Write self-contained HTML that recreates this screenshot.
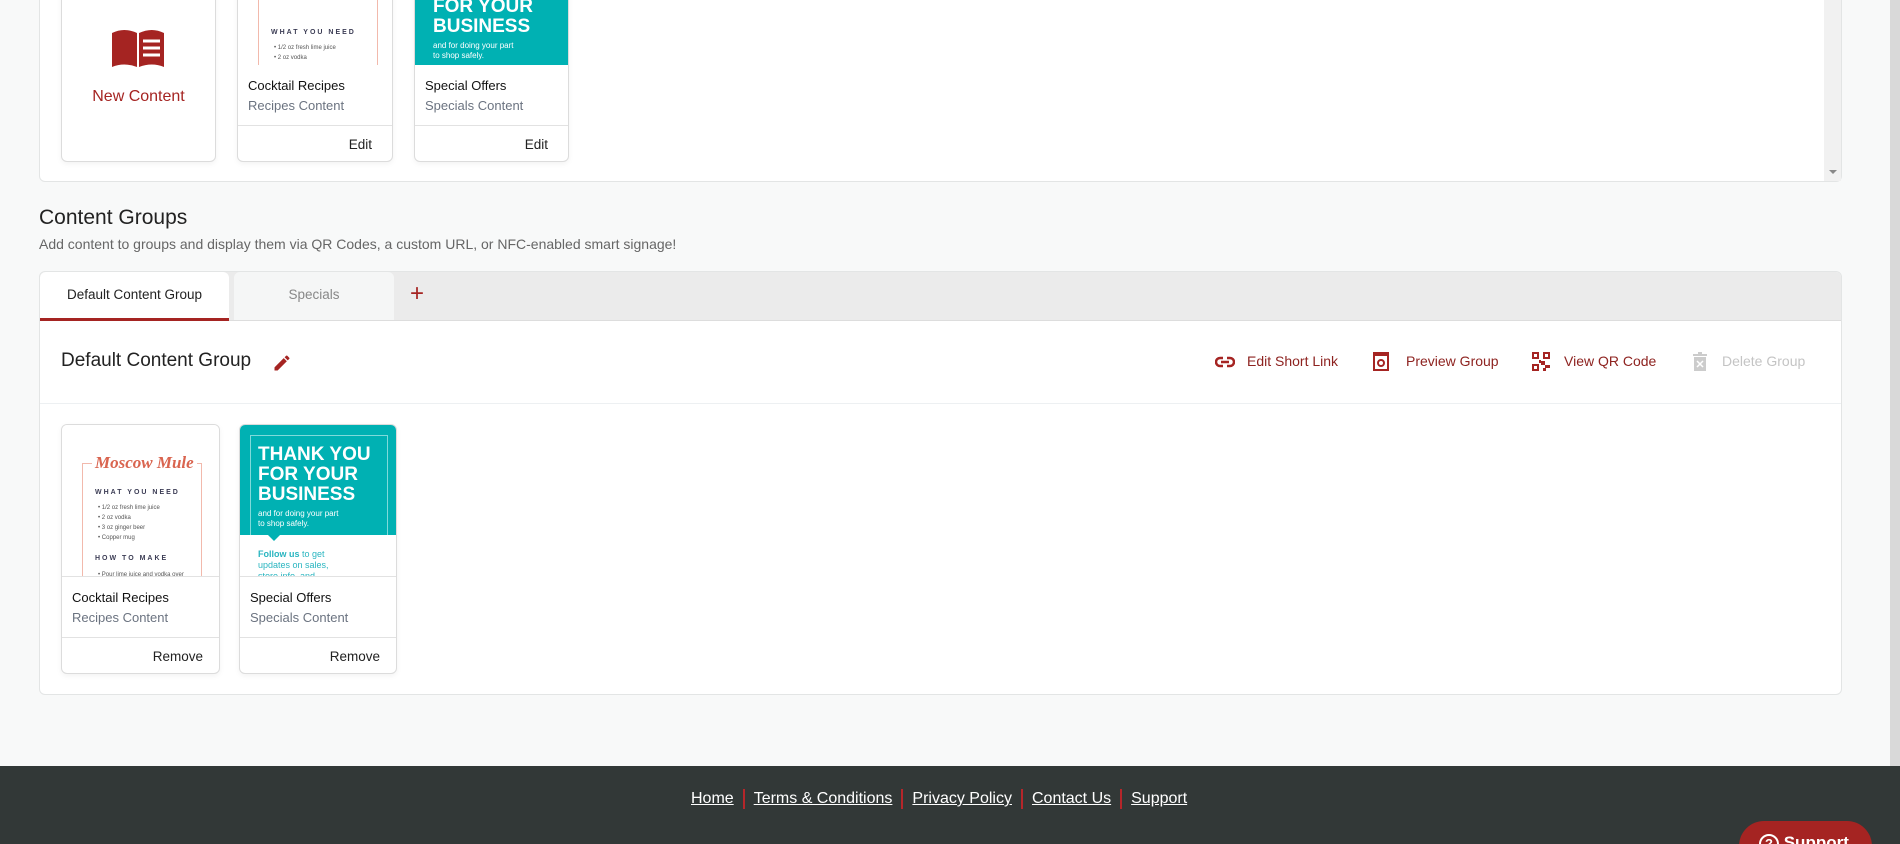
<!DOCTYPE html>
<html style="width:1900px;height:844px;overflow:hidden"><head><meta charset="utf-8"><style>
*{box-sizing:border-box;margin:0;padding:0}
body{width:1900px;height:844px;overflow:hidden;background:#f8f9f9;font-family:"Liberation Sans",sans-serif;position:relative;color:#222}
.abs{position:absolute}
.panel{position:absolute;background:#fff;border:1px solid #e3e5e5;border-radius:6px}
.card{position:absolute;background:#fff;border:1px solid #dcdcdc;border-radius:6px;overflow:hidden;box-shadow:0 2px 6px rgba(0,0,0,.05)}
.card .img{position:absolute;left:0;top:0;right:0;height:152px;overflow:hidden}
.card .t{position:absolute;left:10px;font-size:13px;color:#111}
.card .s{position:absolute;left:10px;font-size:13px;color:#6b7380}
.card .div{position:absolute;left:0;right:0;height:1px;background:#e2e2e2}
.card .b{position:absolute;right:16px;font-size:13.5px;color:#222}
.recipe{background:#fff}
.recipe .fr{position:absolute;left:20px;top:38px;width:120px;height:140px;border:1px solid #f2b9ac}
.recipe .mm{position:absolute;left:30px;top:28px;font:italic bold 17px "Liberation Serif",serif;color:#d9644f;background:#fff;padding:0 3px}
.recipe .h{position:absolute;left:33px;font:bold 7px "Liberation Sans",sans-serif;letter-spacing:2px;color:#3c3d55}
.recipe .l{position:absolute;left:36px;font-size:6px;color:#555;line-height:10px}
.teal{background:#00b1b3;color:#fff}
.teal .big{position:absolute;left:18px;font:bold 19px "Liberation Sans",sans-serif;line-height:20px}
.teal .sm{position:absolute;left:18px;font-size:8px;line-height:10px}
.act{position:absolute;top:353px;font-size:14px;color:#8e2320}
.foot a{color:#fff;text-decoration:underline;font-size:16px}
.sep{display:inline-block;width:2px;height:20px;background:#b5262a;vertical-align:middle;margin:0 9px}
</style></head><body>

<div class="panel" style="left:39px;top:-10px;width:1803px;height:192px"></div>
<div class="abs" style="left:1824px;top:0;width:17px;height:181px;background:#f1f1f1"></div>
<div class="abs" style="left:1829px;top:170px;width:0;height:0;border-left:4px solid transparent;border-right:4px solid transparent;border-top:4px solid #888"></div>

<div class="card" style="left:61px;top:-88px;width:155px;height:250px">
  <svg class="abs" style="left:48px;top:114px" width="56" height="44" viewBox="0 0 56 44"><path d="M2 6 Q14 0 27 6 V40 Q14 35 2 40Z" fill="#a52422"/><path d="M29 6 Q42 0 54 6 V40 Q42 35 29 40Z" fill="#a52422"/><path d="M33 14h17M33 21h17M33 28h17" stroke="#fff" stroke-width="3"/></svg>
  <div class="abs" style="left:0;right:0;top:175px;text-align:center;font-size:16px;color:#a52422">New Content</div>
</div>

<div class="card" style="left:237px;top:-88px;width:156px;height:250px">
  <div class="img recipe"><div class="fr"></div><div class="mm">Moscow Mule</div>
    <div class="h" style="top:116px">WHAT YOU NEED</div>
    <div class="l" style="top:130px">• 1/2 oz fresh lime juice<br>• 2 oz vodka<br>• 3 oz ginger beer</div></div>
  <div class="t" style="top:165px">Cocktail Recipes</div>
  <div class="s" style="top:185px">Recipes Content</div>
  <div class="div" style="top:212px"></div>
  <div class="b" style="top:224px;right:20px">Edit</div>
</div>

<div class="card" style="left:414px;top:-88px;width:155px;height:250px">
  <div class="img teal"><div class="big" style="top:84px">FOR YOUR<br>BUSINESS</div><div class="sm" style="top:128px">and for doing your part<br>to shop safely.</div></div>
  <div class="t" style="top:165px">Special Offers</div>
  <div class="s" style="top:185px">Specials Content</div>
  <div class="div" style="top:212px"></div>
  <div class="b" style="top:224px;right:20px">Edit</div>
</div>

<div class="abs" style="left:39px;top:206px;font-size:21px;color:#222">Content Groups</div>
<div class="abs" style="left:39px;top:236px;font-size:14px;color:#666">Add content to groups and display them via QR Codes, a custom URL, or NFC-enabled smart signage!</div>

<div class="panel" style="left:39px;top:271px;width:1803px;height:424px;overflow:hidden">
  <div class="abs" style="left:0;top:0;right:0;height:49px;background:#ebebeb;border-bottom:1px solid #ddd"></div>
  <div class="abs" style="left:0;top:0;width:189px;height:49px;background:#fff;border-bottom:3px solid #a52422;border-radius:6px 6px 0 0;text-align:center;line-height:46px;font-size:13.5px;color:#222">Default Content Group</div>
  <div class="abs" style="left:194px;top:0;width:160px;height:48px;background:#f5f6f6;border-radius:6px 6px 0 0;text-align:center;line-height:46px;font-size:13.5px;color:#888">Specials</div>
  <div class="abs" style="left:370px;top:8px;font-size:24px;color:#a52422">+</div>
  <div class="abs" style="left:0;right:0;top:131px;height:1px;background:#edf0f2"></div>
</div>
<div class="abs" style="left:61px;top:350px;font-size:19px;color:#222">Default Content Group</div>
<svg class="abs" style="left:272px;top:353px" width="20" height="20" viewBox="0 0 24 24"><path d="M3 17.25V21h3.75L17.8 9.94l-3.75-3.75L3 17.25zM20.7 7.04a1 1 0 000-1.41l-2.34-2.34a1 1 0 00-1.41 0l-1.83 1.83 3.75 3.75 1.83-1.83z" fill="#a52422"/></svg>

<svg class="abs" style="left:1215px;top:355px" width="20" height="14" viewBox="0 0 20 14"><path d="M8 3H5a4 4 0 000 8h3M12 3h3a4 4 0 010 8h-3M6 7h8" stroke="#a52422" stroke-width="2.5" fill="none"/></svg>
<div class="act" style="left:1247px">Edit Short Link</div>
<svg class="abs" style="left:1373px;top:352px" width="16" height="19" viewBox="0 0 16 19"><rect x="1" y="1" width="14" height="17" fill="none" stroke="#a52422" stroke-width="2"/><rect x="1" y="1" width="14" height="3" fill="#a52422"/><circle cx="8" cy="11" r="3" fill="none" stroke="#a52422" stroke-width="2"/></svg>
<div class="act" style="left:1406px">Preview Group</div>
<svg class="abs" style="left:1532px;top:352px" width="18" height="19" viewBox="0 0 18 19"><g fill="#a52422"><rect x="0" y="0" width="7" height="7"/><rect x="11" y="0" width="7" height="7"/><rect x="0" y="12" width="7" height="7"/><rect x="9" y="9" width="4" height="4"/><rect x="13" y="13" width="5" height="3"/><rect x="11" y="16" width="3" height="3"/><rect x="7" y="8" width="2" height="3"/></g><g fill="#fff"><rect x="2" y="2" width="3" height="3"/><rect x="13" y="2" width="3" height="3"/><rect x="2" y="14" width="3" height="3"/></g></svg>
<div class="act" style="left:1564px">View QR Code</div>
<svg class="abs" style="left:1693px;top:352px" width="14" height="19" viewBox="0 0 14 19"><rect x="0" y="2" width="14" height="2" fill="#ccc"/><rect x="5" y="0" width="4" height="2" fill="#ccc"/><rect x="1" y="5" width="12" height="14" fill="#ccc"/><path d="M4 9l6 6M10 9l-6 6" stroke="#fff" stroke-width="1.5"/></svg>
<div class="act" style="left:1722px;color:#c4c4c4">Delete Group</div>

<div class="card" style="left:61px;top:424px;width:159px;height:250px">
  <div class="img recipe"><div class="fr"></div><div class="mm">Moscow Mule</div>
    <div class="h" style="top:64px">WHAT YOU NEED</div>
    <div class="l" style="top:78px">• 1/2 oz fresh lime juice<br>• 2 oz vodka<br>• 3 oz ginger beer<br>• Copper mug</div>
    <div class="h" style="top:130px">HOW TO MAKE</div>
    <div class="l" style="top:145px">• Pour lime juice and vodka over</div></div>
  <div class="div" style="top:151px"></div>
  <div class="t" style="top:165px">Cocktail Recipes</div>
  <div class="s" style="top:185px">Recipes Content</div>
  <div class="div" style="top:212px"></div>
  <div class="b" style="top:224px">Remove</div>
</div>

<div class="card" style="left:239px;top:424px;width:158px;height:250px">
  <div class="img teal"><div class="abs" style="left:10px;top:10px;width:138px;height:150px;border:1px solid #7fdada"></div>
    <div class="big" style="top:20px">THANK YOU<br>FOR YOUR<br>BUSINESS</div>
    <div class="sm" style="top:84px">and for doing your part<br>to shop safely.</div>
    <div class="abs" style="left:0;right:0;top:110px;height:42px;background:#fff"></div>
    <div class="abs" style="left:28px;top:110px;border-left:6px solid transparent;border-right:6px solid transparent;border-top:6px solid #00b1b3"></div>
    <div class="sm" style="top:124px;color:#29b5c0;font-size:9px;line-height:11px"><b>Follow us</b> to get<br>updates on sales,<br>store info, and</div></div>
  <div class="div" style="top:151px"></div>
  <div class="t" style="top:165px">Special Offers</div>
  <div class="s" style="top:185px">Specials Content</div>
  <div class="div" style="top:212px"></div>
  <div class="b" style="top:224px">Remove</div>
</div>

<div class="abs" style="left:1890px;top:0;width:10px;height:766px;background:#d9d9d9"></div>

<div class="abs foot" style="left:0;top:766px;width:1900px;height:78px;background:#323837;overflow:hidden">
  <div class="abs" style="left:691px;top:23px;color:#fff;white-space:nowrap;font-size:16px">
    <a>Home</a><span class="sep"></span><a>Terms &amp; Conditions</a><span class="sep"></span><a>Privacy Policy</a><span class="sep"></span><a>Contact Us</a><span class="sep"></span><a>Support</a>
  </div>
  <div class="abs" style="left:1739px;top:55px;width:133px;height:50px;background:#a52422;border-radius:25px;color:#fff;font-weight:bold;font-size:17px;padding:12px 0 0 20px">
    <span style="display:inline-block;width:20px;height:20px;border:2px solid #fff;border-radius:50%;text-align:center;font-size:13px;line-height:16px;vertical-align:middle">?</span> Support</div>
</div>
</body></html>
